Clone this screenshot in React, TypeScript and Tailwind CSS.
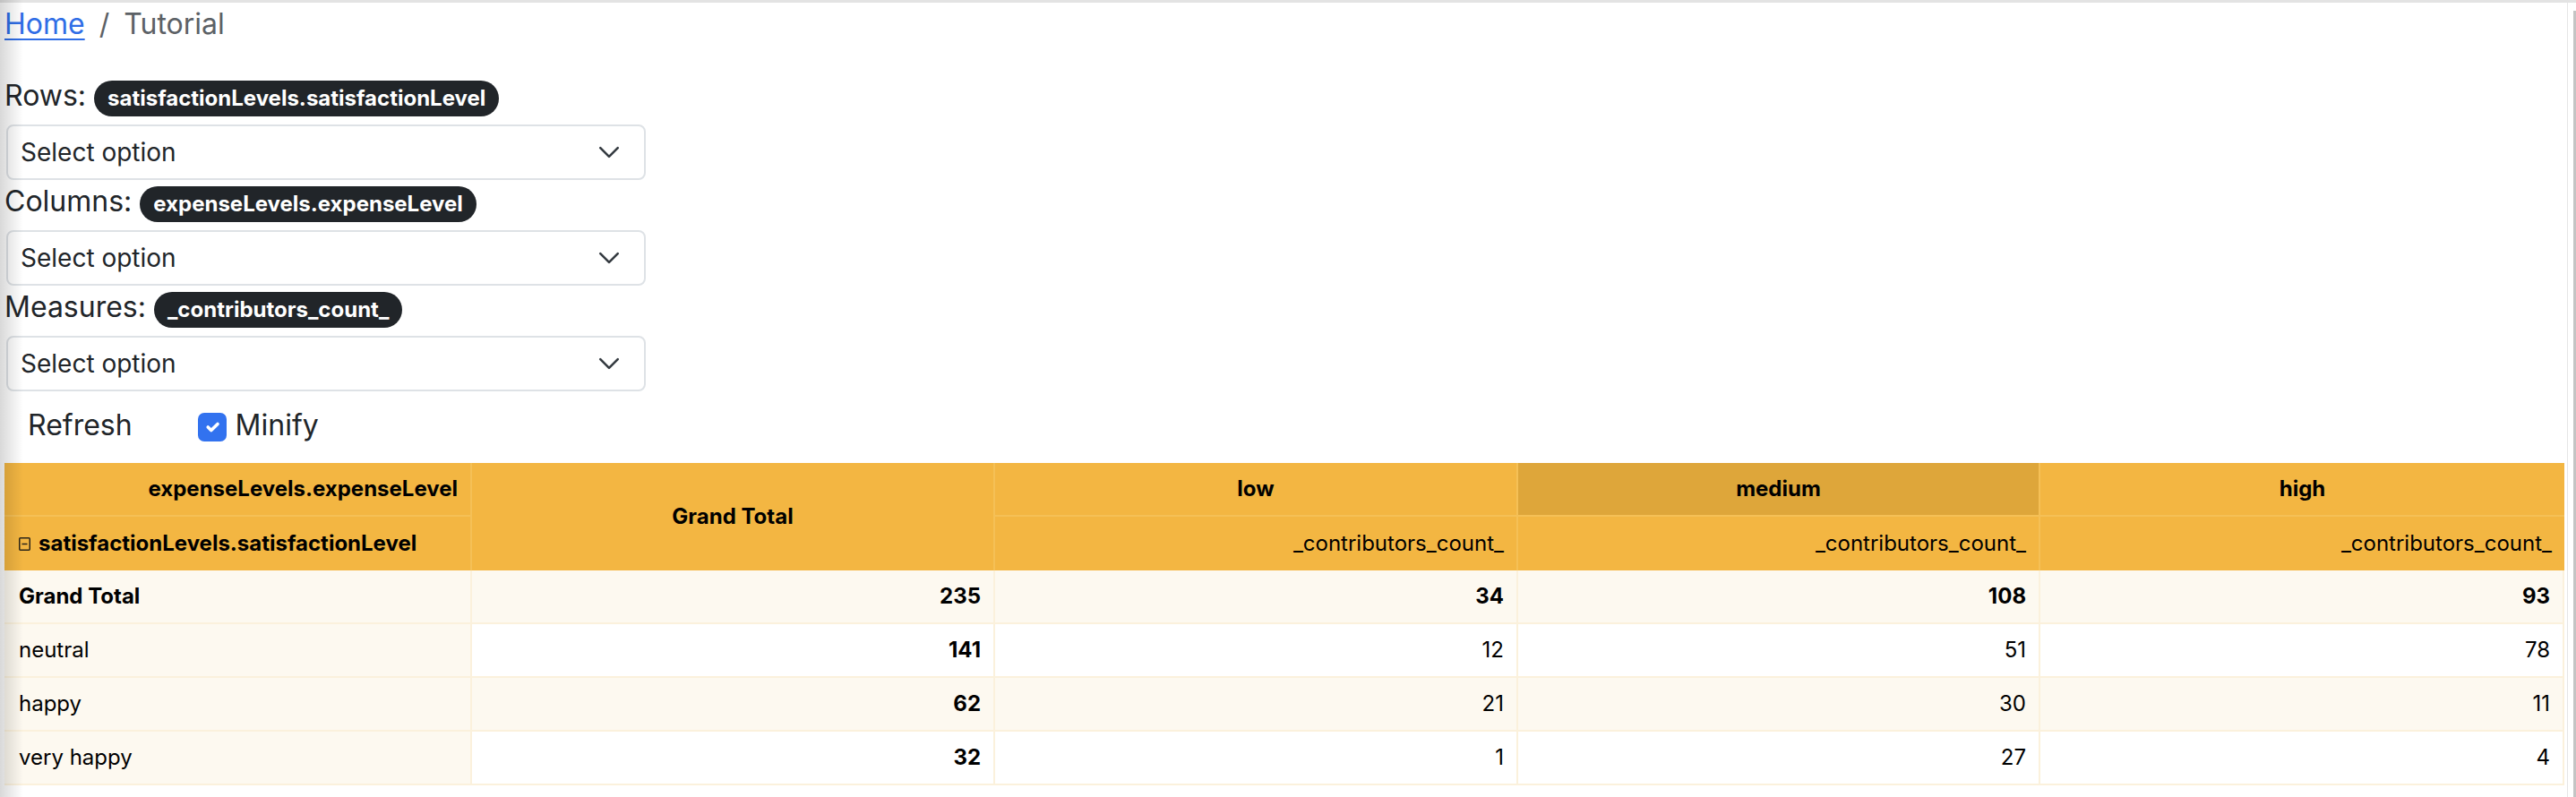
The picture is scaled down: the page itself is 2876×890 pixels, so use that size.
import type { ReactNode } from "react";

const cols = "grid-cols-[522px_584px_584px_583px_585px]";

const rows = [
  { label: "Grand Total", total: "235", low: "34", medium: "108", high: "93", bold: true },
  { label: "neutral", total: "141", low: "12", medium: "51", high: "78" },
  { label: "happy", total: "62", low: "21", medium: "30", high: "11" },
  { label: "very happy", total: "32", low: "1", medium: "27", high: "4" },
];

function Badge({ children }: { children: ReactNode }) {
  return (
    <span className="inline-block rounded-full bg-[#212529] px-[15px] py-[8px] align-baseline text-[24px] font-bold leading-none text-white">
      {children}
    </span>
  );
}

function FieldLabel({ name, value }: { name: string; value: string }) {
  return (
    <div className="mb-2 h-[48px] text-[32px] leading-[48px] text-[#212529]">
      {name}: <Badge>{value}</Badge>
    </div>
  );
}

function SelectBox() {
  return (
    <div className="ml-[2px] flex h-[62px] w-[714px] items-center justify-between rounded-[8px] border-2 border-[#dee2e6] bg-white pl-[14px] pr-[26px] text-[28px] text-[#212529]">
      <span>Select option</span>
      <svg width="26" height="26" viewBox="0 0 16 16" fill="none">
        <path
          d="m2 5 6 6 6-6"
          stroke="#343a40"
          strokeWidth="1.6"
          strokeLinecap="round"
          strokeLinejoin="round"
        />
      </svg>
    </div>
  );
}

function CollapseIcon() {
  return (
    <svg width="13" height="15" viewBox="0 0 13 15" fill="none">
      <rect x="0.75" y="0.75" width="11.5" height="13.5" rx="1" stroke="#2a2418" strokeWidth="1.5" />
      <path d="M3.5 7.5h6" stroke="#2a2418" strokeWidth="1.5" />
    </svg>
  );
}

export default function App() {
  return (
    <div className="relative h-[890px] w-[2876px] overflow-hidden bg-white font-['Inter',sans-serif] text-[#212529]">
      <div className="h-[3px] bg-[#e3e3e3]" />

      <div className="w-[2863px] pl-[5px]">
        <nav className="mb-[32px] flex h-[48px] items-center text-[32px] leading-[48px]">
          <a className="text-[#2f6de6] underline decoration-2 underline-offset-[5px]">Home</a>
          <span className="px-[16px] text-[#5c6166]">/</span>
          <span className="text-[#5c6166]">Tutorial</span>
        </nav>

        <FieldLabel name="Rows" value="satisfactionLevels.satisfactionLevel" />
        <SelectBox />
        <FieldLabel name="Columns" value="expenseLevels.expenseLevel" />
        <SelectBox />
        <FieldLabel name="Measures" value="_contributors_count_" />
        <SelectBox />

        <div className="flex items-start">
          <button
            type="button"
            className="h-[76px] border-2 border-transparent px-[24px] py-[12px] text-[32px] leading-[48px] text-[#212529]"
          >
            Refresh
          </button>
          <label className="ml-[47px] mt-[14px] flex items-start gap-[10px] text-[32px] leading-[48px]">
            <span className="mt-[10px] flex h-[32px] w-[32px] items-center justify-center rounded-[7px] bg-[#3272ef]">
              <svg width="24" height="24" viewBox="0 0 20 20" fill="none">
                <path
                  d="m6 10 3 3 6-6"
                  stroke="#fff"
                  strokeWidth="3"
                  strokeLinecap="round"
                  strokeLinejoin="round"
                />
              </svg>
            </span>
            Minify
          </label>
        </div>

        <div className="mt-[4px] w-[2858px] text-[24px] text-black">
          <div className={`grid ${cols} grid-rows-[60px_60px] bg-[#f3b642] font-bold`}>
            <div className="flex items-center justify-end border-b-2 border-r-2 border-[#f5c056] pr-[14px]">
              expenseLevels.expenseLevel
            </div>
            <div className="row-span-2 flex items-center justify-center border-r-2 border-[#f5c056]">
              Grand Total
            </div>
            <div className="flex items-center justify-center border-b-2 border-r-2 border-[#f5c056]">
              low
            </div>
            <div className="flex items-center justify-center border-b-2 border-r-2 border-[#f5c056] bg-[#dea63a]">
              medium
            </div>
            <div className="flex items-center justify-center border-b-2 border-[#f5c056]">high</div>
            <div className="flex items-center gap-[9px] border-r-2 border-[#f5c056] pl-[16px]">
              <CollapseIcon />
              satisfactionLevels.satisfactionLevel
            </div>
            <div className="flex items-center justify-end border-r-2 border-[#f5c056] pr-[14px] font-normal">
              _contributors_count_
            </div>
            <div className="flex items-center justify-end border-r-2 border-[#f5c056] pr-[14px] font-normal">
              _contributors_count_
            </div>
            <div className="flex items-center justify-end pr-[14px] font-normal">_contributors_count_</div>
          </div>

          {rows.map((row, i) => {
            const shaded = i % 2 === 0;
            const cell = `flex items-center justify-end border-b-2 border-r-2 border-[#fbf1dc] pr-[14px] ${
              shaded ? "bg-[#fdf9f0]" : "bg-white"
            }`;
            return (
              <div
                key={row.label}
                className={`grid ${cols} h-[60px] ${row.bold ? "font-bold" : ""}`}
              >
                <div className="flex items-center border-b-2 border-r-2 border-[#fbf1dc] bg-[#fdf9f0] pl-[16px]">
                  {row.label}
                </div>
                <div className={`${cell} font-bold`}>{row.total}</div>
                <div className={cell}>{row.low}</div>
                <div className={cell}>{row.medium}</div>
                <div className={cell}>{row.high}</div>
              </div>
            );
          })}
        </div>
      </div>

      <div className="pointer-events-none absolute left-0 top-0 h-full w-[26px] bg-gradient-to-r from-black/15 to-transparent" />
      <div className="absolute right-[9px] top-[3px] h-full w-px bg-[#e6e6e6]" />
      <div className="absolute right-0 top-[12px] h-full w-[3px] bg-[#c4c4c4]" />
    </div>
  );
}
